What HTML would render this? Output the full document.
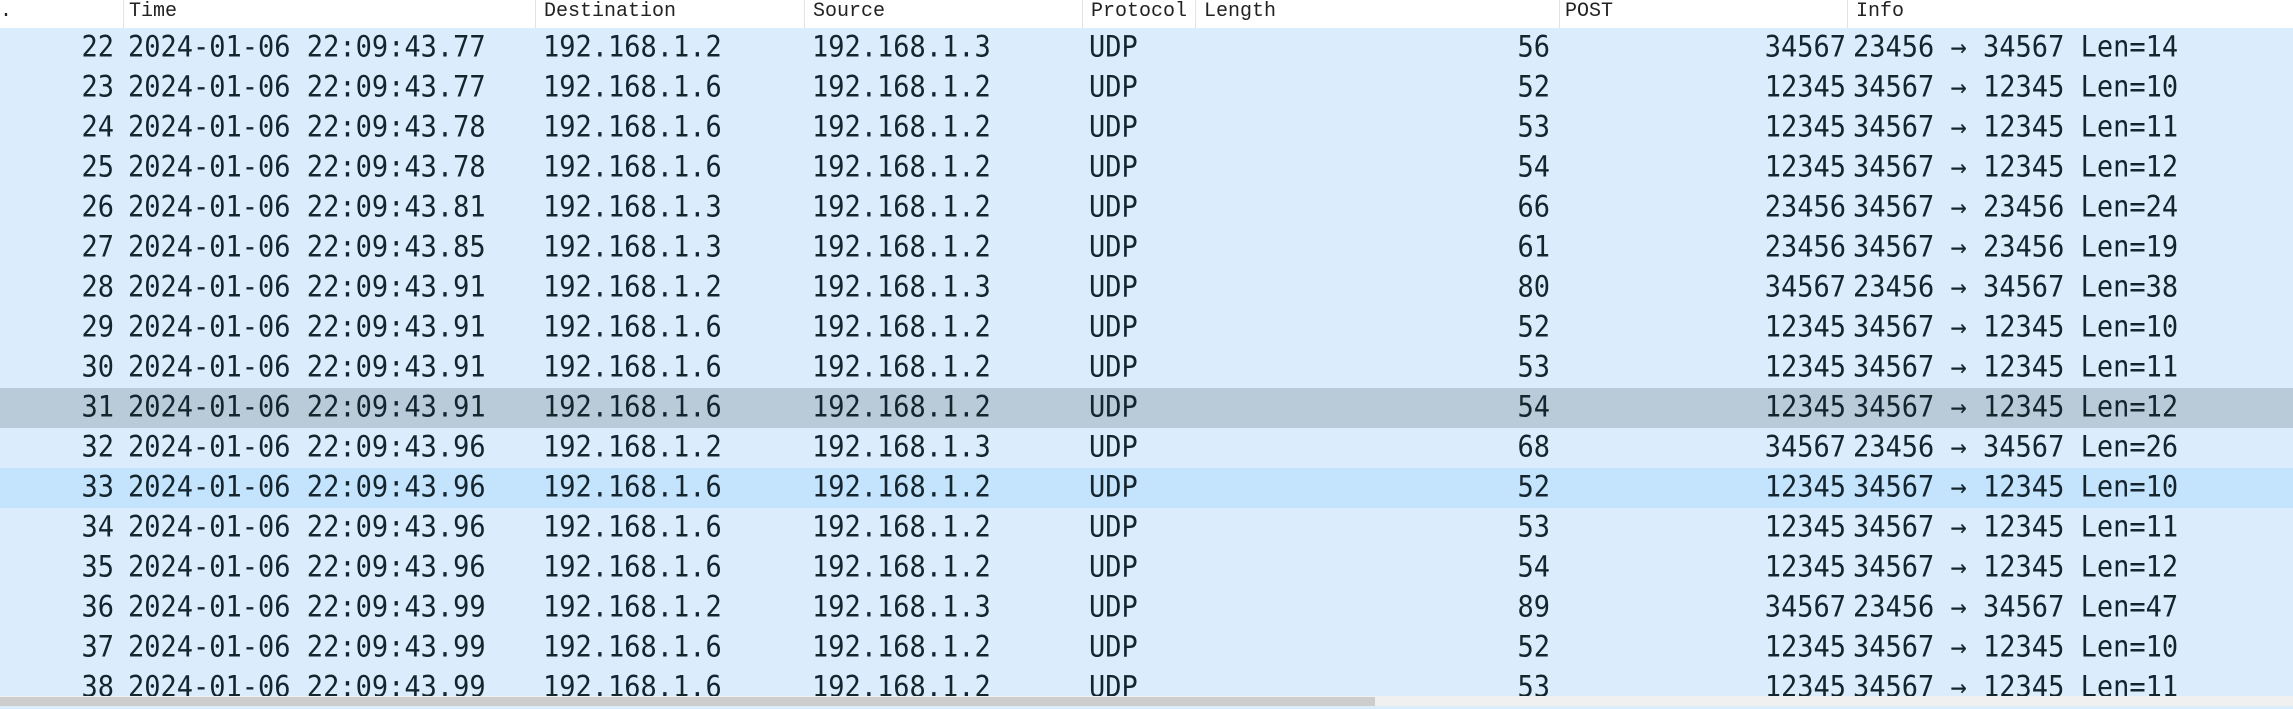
<!DOCTYPE html>
<html><head><meta charset="utf-8"><style>
*{margin:0;padding:0;box-sizing:border-box}
body{width:2293px;height:706px;overflow:hidden;background:#dbedfd;position:relative;font-family:"DejaVu Sans Mono",monospace;color:#15252e}
.hdr{position:absolute;left:0;top:0;width:2293px;height:28px;background:#fff;font-size:20px;color:#222;font-family:"Liberation Mono",monospace}
.hdr span{position:absolute;top:0;line-height:24px}
.hdr i{position:absolute;top:0;width:1px;height:28px;background:#e3e3e3}
.row{position:absolute;left:0;width:2293px;height:40px;font-size:27px;line-height:40px}
.row span{position:absolute;top:0;white-space:pre;transform:scaleY(1.08);transform-origin:50% 55%}
.r{text-align:right}
.sb{position:absolute;left:0;top:696px;width:2293px;height:10px;background:#f0f0f0}
.th{position:absolute;left:0;top:697px;width:1375px;height:9px;background:#cdcdcd}
</style></head><body>
<div class="hdr">
<span style="left:0">.</span>
<i style="left:123px"></i><span style="left:129px">Time</span>
<i style="left:535px"></i><span style="left:544px">Destination</span>
<i style="left:804px"></i><span style="left:813px">Source</span>
<i style="left:1082px"></i><span style="left:1091px">Protocol</span>
<i style="left:1195px"></i><span style="left:1204px">Length</span>
<i style="left:1559px"></i><span style="left:1565px">POST</span>
<i style="left:1847px"></i><span style="left:1856px">Info</span>
</div>
<div id="rows"></div>
<div class="sb"></div><div class="th"></div>
<script>
var d=[
[22,"77","2","3",56,34567,"23456","34567",14],
[23,"77","6","2",52,12345,"34567","12345",10],
[24,"78","6","2",53,12345,"34567","12345",11],
[25,"78","6","2",54,12345,"34567","12345",12],
[26,"81","3","2",66,23456,"34567","23456",24],
[27,"85","3","2",61,23456,"34567","23456",19],
[28,"91","2","3",80,34567,"23456","34567",38],
[29,"91","6","2",52,12345,"34567","12345",10],
[30,"91","6","2",53,12345,"34567","12345",11],
[31,"91","6","2",54,12345,"34567","12345",12],
[32,"96","2","3",68,34567,"23456","34567",26],
[33,"96","6","2",52,12345,"34567","12345",10],
[34,"96","6","2",53,12345,"34567","12345",11],
[35,"96","6","2",54,12345,"34567","12345",12],
[36,"99","2","3",89,34567,"23456","34567",47],
[37,"99","6","2",52,12345,"34567","12345",10],
[38,"99","6","2",53,12345,"34567","12345",11]];
var h="";
d.forEach(function(r,i){
var bg=i==9?"#b9cbd9":(i==11?"#c4e3fd":"#dbedfd");
h+='<div class="row" style="top:'+(28+i*40)+'px;background:'+bg+'">'+
'<span class="r" style="left:0;width:114px">'+r[0]+'</span>'+
'<span style="left:128px">2024-01-06 22:09:43.'+r[1]+'</span>'+
'<span style="left:543px">192.168.1.'+r[2]+'</span>'+
'<span style="left:812px">192.168.1.'+r[3]+'</span>'+
'<span style="left:1089px">UDP</span>'+
'<span class="r" style="left:1400px;width:150px">'+r[4]+'</span>'+
'<span class="r" style="left:1650px;width:196px">'+r[5]+'</span>'+
'<span style="left:1853px">'+r[6]+' \u2192 '+r[7]+' Len='+r[8]+'</span></div>';
});
document.getElementById("rows").innerHTML=h;
</script>
</body></html>
